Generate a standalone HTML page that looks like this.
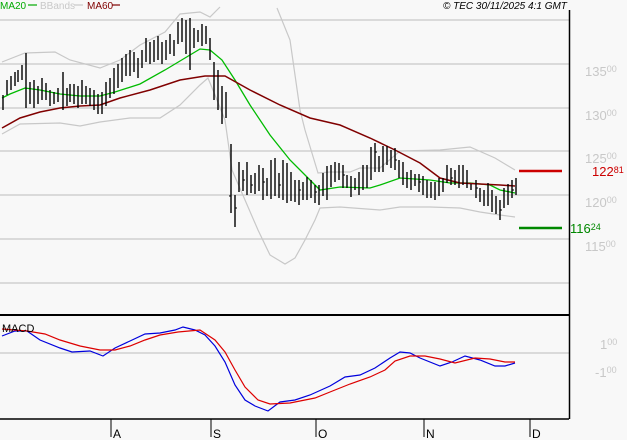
<!DOCTYPE html>
<html><head><style>
html,body{margin:0;padding:0;background:#f8f8f8;}
svg{display:block;font-family:"Liberation Sans",sans-serif;}
</style></head><body>
<svg width="627" height="440" viewBox="0 0 627 440" xmlns="http://www.w3.org/2000/svg">
<rect width="627" height="440" fill="#f8f8f8"/>
<g stroke="#c8c8c8" stroke-width="1.3">
<line x1="0" y1="20" x2="569" y2="20"/><line x1="0" y1="64" x2="569" y2="64"/><line x1="0" y1="108" x2="569" y2="108"/><line x1="0" y1="151" x2="569" y2="151"/><line x1="0" y1="195" x2="569" y2="195"/><line x1="0" y1="239" x2="569" y2="239"/><line x1="0" y1="283" x2="569" y2="283"/><line x1="0" y1="353" x2="569" y2="353"/>
</g>
<g fill="#c8c8c8" font-size="13">
<text x="585" y="76">135<tspan font-size="9" dy="-4">00</tspan></text>
<text x="585" y="120">130<tspan font-size="9" dy="-4">00</tspan></text>
<text x="585" y="163">125<tspan font-size="9" dy="-4">00</tspan></text>
<text x="585" y="207">120<tspan font-size="9" dy="-4">00</tspan></text>
<text x="585" y="251">115<tspan font-size="9" dy="-4">00</tspan></text>
<text x="600" y="349">1<tspan font-size="9" dy="-4">00</tspan></text>
<text x="595" y="377">-1<tspan font-size="9" dy="-4">00</tspan></text>
</g>
<text x="592" y="176" fill="#cc0000" font-size="13">122<tspan font-size="9" dy="-3">81</tspan></text>
<text x="570" y="233" fill="#008800" font-size="13">116<tspan font-size="9" dy="-3">24</tspan></text>
<line x1="519" y1="171" x2="562" y2="171" stroke="#cc0000" stroke-width="2.5"/>
<line x1="519" y1="228" x2="562" y2="228" stroke="#008800" stroke-width="2.5"/>
<g fill="none" stroke="#c8c8c8" stroke-width="1.2">
<polyline points="2,62 25,53 55,52 70,60 100,68 120,60 140,45 165,32 180,14 200,12 210,17 220,7"/>
<polyline points="277,8 290,40 300,110 305,130 318,173 330,172 350,172 360,168 380,168 400,151 440,150 470,147 495,158 515,170"/>
<polyline points="2,134 20,124 60,123 80,126 100,122 130,118 160,118 180,105 200,85 208,78 215,95 225,120 232,170 245,200 258,230 270,255 285,264 295,258 305,240 315,220 320,208 340,207 380,210 400,207 430,207 460,208 480,212 500,215 515,217"/>
</g>
<polyline fill="none" stroke="#00bb00" stroke-width="1.3" points="2,98 10,94 25,88 40,90 60,94 80,96 100,96 115,92 140,84 165,70 185,58 200,49 210,50 222,60 235,80 250,105 270,135 290,160 310,180 320,190 340,187 370,188 380,185 400,178 430,180 450,183 470,183 490,185 500,190 515,193"/>
<polyline fill="none" stroke="#800000" stroke-width="1.5" points="2,128 20,118 40,112 60,108 80,106 100,105 120,98 150,90 180,80 205,76 225,76 250,90 280,105 310,118 340,125 370,138 395,150 420,163 440,178 460,183 480,184 500,185 515,186"/>
<path stroke="#000" stroke-width="1.4" fill="none" d="M3 95V110M7 80V95M11 76V90M15 72V86M18 70V82M22 65V80M26 53V108M30 82V104M34 80V108M38 86V104M42 78V100M46 83V100M50 90V106M54 92V104M58 88V102M63 72V110M67 88V106M70 84V102M74 84V104M78 86V108M82 80V104M86 86V104M90 88V106M94 90V110M98 94V114M102 92V114M106 82V106M110 78V98M114 68V94M118 64V88M122 58V82M126 54V76M130 50V76M134 52V72M138 58V78M142 50V68M146 38V62M150 42V64M154 40V62M158 36V60M162 42V64M166 40V60M170 34V54M174 40V56M178 22V44M182 18V42M186 20V54M190 18V70M194 28V48M198 30V42M202 24V46M206 26V44M210 38V60M214 62V100M218 70V110M222 86V124M226 92V118M231 144V213M235 195V227M239 162V192M243 170V191M247 162V195M251 175V193M255 173V194M259 165V191M263 168V200M267 178V196M271 160V199M275 158V196M279 173V198M283 160V200M287 163V203M291 172V201M295 180V202M299 180V205M303 182V200M307 177V200M311 180V198M315 185V203M319 185V205M323 173V196M327 166V200M331 165V187M335 162V182M339 163V180M343 165V188M347 175V188M351 176V197M355 178V190M359 172V195M363 165V190M367 165V188M371 147V180M375 143V172M379 156V172M383 146V172M387 146V165M391 150V168M395 148V170M399 160V178M403 162V185M407 172V188M411 170V190M415 174V186M419 174V192M423 176V195M427 180V198M431 182V198M435 182V200M439 178V196M443 178V192M447 165V183M451 168V185M455 170V185M459 165V188M463 165V185M467 170V188M471 184V190M476 180V198M480 188V202M484 190V206M488 183V206M492 190V212M496 196V214M500 200V220M504 188V208M508 184V205M512 180V198M516 178V195"/>
<path stroke="#000" stroke-width="1" fill="none" d="M231 196h-2M235 208h2M243 180h2M251 185h2M263 182h2M279 185h2M299 190h2M315 192h2M343 175h2M375 152h2M395 160h2M419 182h2M451 178h2M476 188h2M500 210h2M512 190h2"/>
<line x1="0" y1="315" x2="569" y2="315" stroke="#000" stroke-width="2"/>
<line x1="569.5" y1="10" x2="569.5" y2="419" stroke="#000" stroke-width="1.5"/>
<line x1="0" y1="419" x2="569" y2="419" stroke="#000" stroke-width="1.5"/>
<g stroke="#000" stroke-width="1"><line x1="111" y1="419" x2="111" y2="437"/><line x1="211" y1="419" x2="211" y2="437"/><line x1="316" y1="419" x2="316" y2="437"/><line x1="424" y1="419" x2="424" y2="437"/><line x1="530" y1="419" x2="530" y2="437"/></g>
<g font-size="12" fill="#000"><text x="113" y="438">A</text><text x="213" y="438">S</text><text x="318" y="438">O</text><text x="426" y="438">N</text><text x="532" y="438">D</text></g>
<polyline fill="none" stroke="#0000dd" stroke-width="1.2" points="2,336 15,331 27,331 40,340 60,348 72,352 90,351 103,356 115,348 130,341 145,334 160,333 175,330 183,327 195,330 205,335 215,346 225,362 235,385 245,400 255,406 268,411 280,402 295,400 310,395 330,386 345,377 360,375 375,368 390,358 400,352 410,353 420,358 440,366 452,362 465,356 480,360 495,366 505,366 515,363"/>
<polyline fill="none" stroke="#dd0000" stroke-width="1.2" points="2,329 27,331 45,334 60,340 80,346 100,350 115,350 130,346 145,340 160,335 178,332 200,330 215,340 225,352 235,370 245,387 258,400 270,404 290,403 315,398 330,392 350,384 370,377 385,370 395,361 410,356 425,356 440,359 455,363 475,358 490,359 505,362 515,362"/>
<text x="2" y="332" font-size="11" fill="#000">MACD</text>
<g font-size="10">
<text x="0" y="9" fill="#00aa00">MA20</text><line x1="28" y1="5" x2="37" y2="5" stroke="#00aa00" stroke-width="1.2"/>
<text x="40" y="9" fill="#c8c8c8">BBands</text><line x1="74" y1="5" x2="83" y2="5" stroke="#c8c8c8" stroke-width="1.2"/>
<text x="87" y="9" fill="#800000">MA60</text><line x1="112" y1="5" x2="120" y2="5" stroke="#800000" stroke-width="1.2"/>
<text x="443" y="9" fill="#000" font-style="italic">© TEC 30/11/2025 4:1 GMT</text>
</g>
</svg>
</body></html>
